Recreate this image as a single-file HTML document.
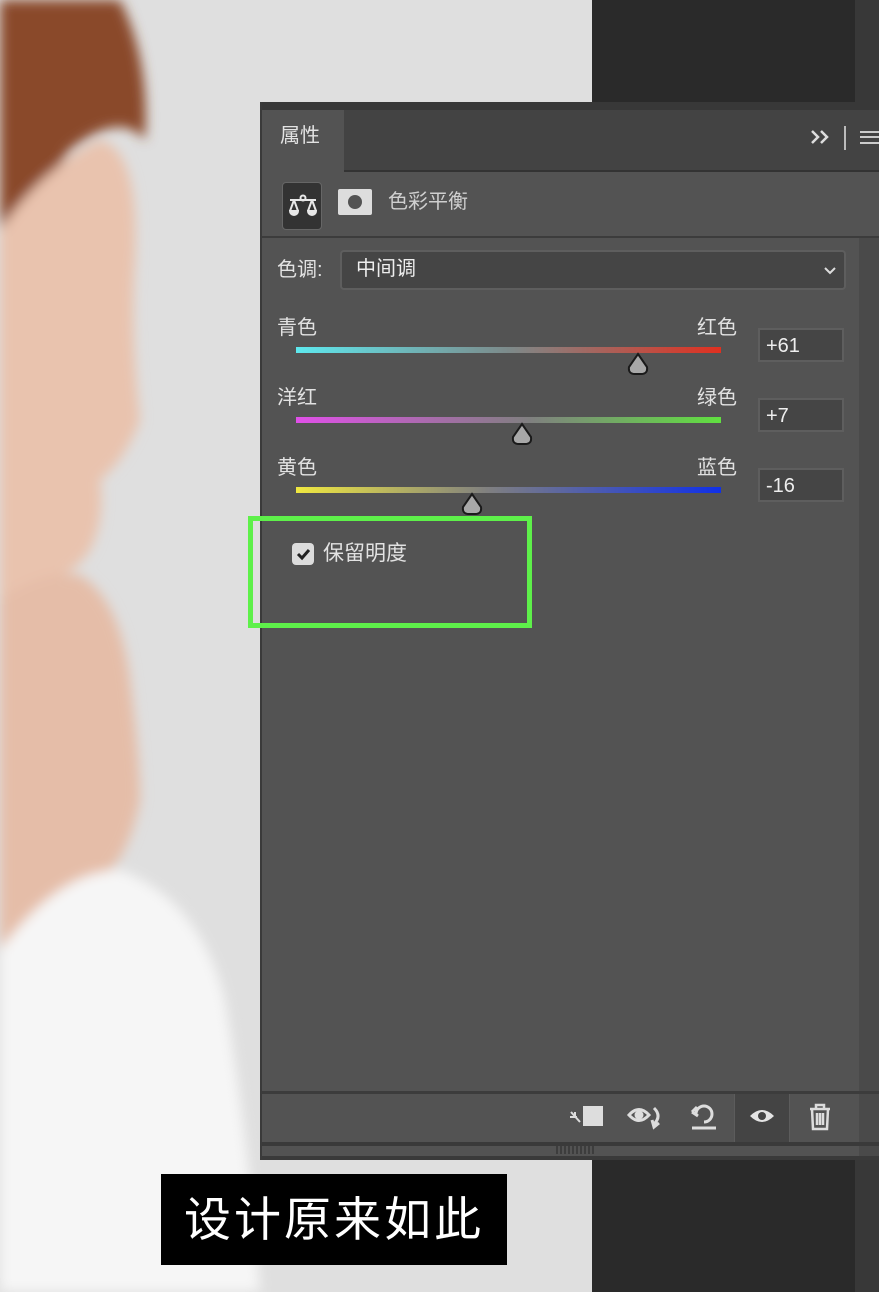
<!DOCTYPE html>
<html><head><meta charset="utf-8"><style>
*{margin:0;padding:0;box-sizing:border-box}
body{width:879px;height:1292px;overflow:hidden;position:relative;background:#dedede;font-family:"Liberation Sans","Noto Sans CJK SC",sans-serif}
.abs{position:absolute}
.t{color:#e2e2e2;font-size:20px;line-height:1}
.bar{position:absolute;left:296px;width:425px;height:6px}
.num{position:absolute;left:758px;width:86px;height:34px;border:2px solid #5e5e5e;background:#454545;color:#eee;font-size:20px;padding:5px 0 0 6px}
.thumb{position:absolute;width:22px;height:24px}
</style></head><body>
<svg class="abs" style="left:0;top:0" width="600" height="1292">
<defs><filter id="b"><feGaussianBlur stdDeviation="6"/></filter></defs>
<rect width="600" height="1292" fill="#dfdfdf"/>
<g filter="url(#b)">
<path d="M0 0 H120 Q150 60 145 140 Q120 110 70 150 Q30 210 0 230Z" fill="#8a4a2c"/>
<path d="M0 230 Q40 170 100 140 Q140 150 135 260 Q130 330 140 420 Q125 460 100 480 Q105 520 90 550 Q70 580 40 580 L0 600Z" fill="#e9c3ae"/>
<path d="M0 600 Q40 570 80 575 Q120 600 130 680 Q140 760 140 800 Q130 850 110 870 L0 950Z" fill="#e5bda8"/>
<path d="M0 950 Q60 870 120 870 Q200 900 225 1000 Q250 1150 260 1292 H0Z" fill="#f6f6f6"/>
</g>
</svg>
<div class="abs" style="left:592px;top:0;width:263px;height:1292px;background:#2a2a2a"></div>
<div class="abs" style="left:855px;top:0;width:24px;height:1292px;background:#383838"></div>
<div class="abs" style="left:260px;top:102px;width:619px;height:1058px;background:#535353;border-left:2px solid #3a3a3a">
 <div class="abs" style="left:0;top:0;width:619px;height:8px;background:#383838"></div>
 <div class="abs" style="left:0;top:8px;width:619px;height:62px;background:#434343;border-bottom:2px solid #333"></div>
 <div class="abs" style="left:0;top:8px;width:82px;height:64px;background:#535353"></div>
 <div class="abs t" style="left:18px;top:24px;font-size:20px">属性</div>
 <svg class="abs" style="left:548px;top:27px" width="22" height="16" fill="none" stroke="#ddd" stroke-width="2.5"><path d="M2 2L8 8L2 14M11 2L17 8L11 14"/></svg>
 <div class="abs" style="left:582px;top:24px;width:2px;height:24px;background:#bbb"></div>
 <div class="abs" style="left:598px;top:29px;width:21px;height:13px;border-top:2px solid #ccc;border-bottom:2px solid #ccc"><div style="margin-top:3px;height:2px;background:#ccc"></div></div>
 <div class="abs" style="left:20px;top:80px;width:40px;height:48px;background:#333;border:1px solid #666;border-radius:4px"></div>
 <svg class="abs" style="left:24px;top:88px" width="34" height="34" viewBox="0 0 34 34" fill="none" stroke="#e8e8e8" stroke-width="2"><circle cx="17" cy="8" r="2.5"/><path d="M4 10H30M8 10L4 21M8 10L12 21M26 10L22 21M26 10L30 21"/><path d="M4 21H12A4 4 0 0 1 4 21ZM22 21H30A4 4 0 0 1 22 21Z" fill="#e8e8e8"/></svg>
 <div class="abs" style="left:76px;top:87px;width:34px;height:26px;background:#ddd;border-radius:2px"><div style="margin:6px auto;width:14px;height:14px;border-radius:50%;background:#535353"></div></div>
 <div class="abs t" style="left:126px;top:90px;color:#cfcfcf">色彩平衡</div>
 <div class="abs" style="left:0;top:134px;width:619px;height:2px;background:#3c3c3c"></div>
 <div class="abs" style="left:597px;top:136px;width:22px;height:922px;background:#4a4a4a"></div>
 <div class="abs t" style="left:15px;top:158px">色调:</div>
 <div class="abs" style="left:78px;top:148px;width:506px;height:40px;background:#454545;border:2px solid #5e5e5e;border-radius:4px"></div>
 <div class="abs t" style="left:94px;top:157px;color:#eee">中间调</div>
 <svg class="abs" style="left:561px;top:164px" width="14" height="10"><path d="M2 2L7 7L12 2" stroke="#ddd" stroke-width="2" fill="none"/></svg>
</div>
<div class="abs t" style="left:277px;top:318px">青色</div><div class="abs t" style="left:697px;top:318px">红色</div>
<div class="bar" style="top:347px;background:linear-gradient(90deg,#5ee8ee,#7d8a8a 50%,#e03020)"></div>
<div class="num" style="top:328px">+61</div>
<div class="abs t" style="left:277px;top:388px">洋红</div><div class="abs t" style="left:697px;top:388px">绿色</div>
<div class="bar" style="top:417px;background:linear-gradient(90deg,#e050e8,#808080 55%,#60e040)"></div>
<div class="num" style="top:398px">+7</div>
<div class="abs t" style="left:277px;top:458px">黄色</div><div class="abs t" style="left:697px;top:458px">蓝色</div>
<div class="bar" style="top:487px;background:linear-gradient(90deg,#f0e840,#808080 45%,#1030e8)"></div>
<div class="num" style="top:468px">-16</div>
<svg class="thumb" style="left:627px;top:352px" viewBox="0 0 22 24"><path d="M11 2L20 15Q21 22 14 22H8Q1 22 2 15Z" fill="#a8a8a8" stroke="#1a1a1a" stroke-width="2"/></svg>
<svg class="thumb" style="left:511px;top:422px" viewBox="0 0 22 24"><path d="M11 2L20 15Q21 22 14 22H8Q1 22 2 15Z" fill="#a8a8a8" stroke="#1a1a1a" stroke-width="2"/></svg>
<svg class="thumb" style="left:461px;top:492px" viewBox="0 0 22 24"><path d="M11 2L20 15Q21 22 14 22H8Q1 22 2 15Z" fill="#a8a8a8" stroke="#1a1a1a" stroke-width="2"/></svg>
<div class="abs" style="left:248px;top:516px;width:284px;height:112px;border:5px solid #5ef04a"></div>
<div class="abs" style="left:292px;top:543px;width:22px;height:22px;background:#dcdcdc;border-radius:4px"></div>
<svg class="abs" style="left:292px;top:543px" width="22" height="22"><path d="M6 11L10 15L17 7" stroke="#222" stroke-width="3" fill="none"/></svg>
<div class="abs t" style="left:323px;top:543px;font-size:21px">保留明度</div>
<div class="abs" style="left:262px;top:1091px;width:617px;height:3px;background:#3c3c3c"></div>
<div class="abs" style="left:734px;top:1094px;width:56px;height:48px;background:#444;border-left:1px solid #5c5c5c;border-right:1px solid #5c5c5c"></div>
<div class="abs" style="left:262px;top:1142px;width:617px;height:4px;background:#3a3a3a"></div>
<div class="abs" style="left:262px;top:1156px;width:617px;height:4px;background:#3a3a3a"></div>
<div class="abs" style="left:556px;top:1146px;width:40px;height:8px;background:repeating-linear-gradient(90deg,#3d3d3d 0 2px,transparent 2px 4px)"></div>
<svg class="abs" style="left:566px;top:1104px" width="40" height="26"><rect x="17" y="2" width="20" height="20" fill="#ddd"/><path d="M5 8L14 18M9 8V14M4 13H11" stroke="#ddd" stroke-width="2"/></svg>
<svg class="abs" style="left:626px;top:1104px" width="40" height="28" fill="none" stroke="#ddd" stroke-width="3"><path d="M3 11Q13 0 23 11Q13 22 3 11Z"/><circle cx="13" cy="11" r="3" fill="#ddd"/><path d="M28 4Q36 12 28 20M26 16L28 23L33 19"/></svg>
<svg class="abs" style="left:688px;top:1102px" width="32" height="30" fill="none" stroke="#ddd" stroke-width="3"><path d="M8 12A8 8 0 1 1 16 20M4 10L9 5M4 10L10 14"/><path d="M4 26H28"/></svg>
<svg class="abs" style="left:748px;top:1106px" width="28" height="20"><path d="M2 10Q14 -2 26 10Q14 22 2 10Z" fill="#e4e4e4"/><circle cx="14" cy="10" r="4" fill="#444"/></svg>
<svg class="abs" style="left:806px;top:1102px" width="28" height="30" fill="none" stroke="#ddd" stroke-width="2.5"><path d="M4 7H24M10 7V3H18V7M6 7L7 27H21L22 7M11 11V23M14 11V23M17 11V23"/></svg>
<div class="abs" style="left:161px;top:1174px;width:346px;height:91px;background:#000;color:#fff;font-size:47px;text-align:center;line-height:91px;letter-spacing:3px">设计原来如此</div>
</body></html>
